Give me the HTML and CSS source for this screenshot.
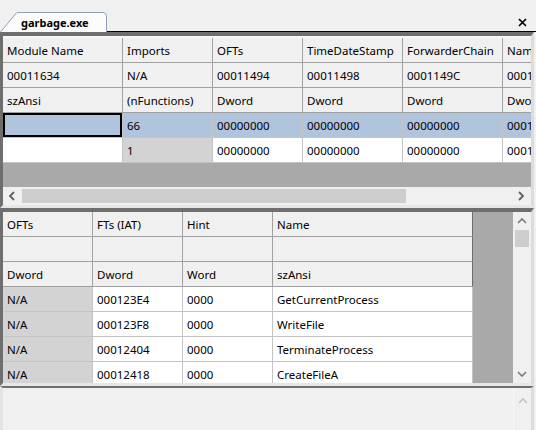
FILE: index.html
```html
<!DOCTYPE html>
<html lang="en">
<head>
  <meta charset="UTF-8">
  <title>garbage.exe - Imports</title>
  <link rel="stylesheet" href="styles.css">
</head>
<body>
  <div class="tabs">
    <div class="tab">
      <svg class="tab-shape" width="108" height="20" viewBox="0 0 108 20">
        <path d="M0.5 20 L16 1.5 Q16.5 0.5 18 0.5 H103 Q106.5 0.5 106.5 4 V20" fill="#fcfcfc" stroke="#8fa0b6" stroke-width="1"/>
      </svg>
      <span class="tab-label">garbage.exe</span>
    </div>
    <div class="tab-rest">
      <svg class="close" width="9" height="9" viewBox="0 0 9 9">
        <path d="M1 1 L8 8 M8 1 L1 8" stroke="#000" stroke-width="1.7"/>
      </svg>
    </div>
  </div>

  <div class="panel upper">
    <div class="grid-view">
      <div class="grid cols-up">
        <div class="c hd">Module Name</div>
        <div class="c hd">Imports</div>
        <div class="c hd">OFTs</div>
        <div class="c hd">TimeDateStamp</div>
        <div class="c hd">ForwarderChain</div>
        <div class="c hd">Name</div>

        <div class="c hd">00011634</div>
        <div class="c hd">N/A</div>
        <div class="c hd">00011494</div>
        <div class="c hd">00011498</div>
        <div class="c hd">0001149C</div>
        <div class="c hd">000117A0</div>

        <div class="c hd">szAnsi</div>
        <div class="c hd">(nFunctions)</div>
        <div class="c hd">Dword</div>
        <div class="c hd">Dword</div>
        <div class="c hd">Dword</div>
        <div class="c hd">Dword</div>

        <div class="c sel focus"></div>
        <div class="c sel">66</div>
        <div class="c sel">00000000</div>
        <div class="c sel">00000000</div>
        <div class="c sel">00000000</div>
        <div class="c sel">00012000</div>

        <div class="c wh"></div>
        <div class="c dim">1</div>
        <div class="c wh">00000000</div>
        <div class="c wh">00000000</div>
        <div class="c wh">00000000</div>
        <div class="c wh">00012100</div>
      </div>
    </div>
    <div class="hscroll">
      <svg class="arrow" width="8" height="10" viewBox="0 0 8 10">
        <path d="M6 1 L2 5 L6 9" fill="none" stroke="#606060" stroke-width="1.8"/>
      </svg>
      <div class="h-track"><div class="h-thumb"></div></div>
      <svg class="arrow" width="8" height="10" viewBox="0 0 8 10">
        <path d="M2 1 L6 5 L2 9" fill="none" stroke="#606060" stroke-width="1.8"/>
      </svg>
    </div>
  </div>

  <div class="panel lower">
    <div class="lower-body">
      <div class="grid-view">
        <div class="grid cols-low">
          <div class="c hd">OFTs</div>
          <div class="c hd">FTs (IAT)</div>
          <div class="c hd">Hint</div>
          <div class="c hd last">Name</div>

          <div class="c hd"></div>
          <div class="c hd"></div>
          <div class="c hd"></div>
          <div class="c hd last"></div>

          <div class="c hd">Dword</div>
          <div class="c hd">Dword</div>
          <div class="c hd">Word</div>
          <div class="c hd last">szAnsi</div>

          <div class="c dim">N/A</div>
          <div class="c wh">000123E4</div>
          <div class="c wh">0000</div>
          <div class="c wh">GetCurrentProcess</div>

          <div class="c dim">N/A</div>
          <div class="c wh">000123F8</div>
          <div class="c wh">0000</div>
          <div class="c wh">WriteFile</div>

          <div class="c dim">N/A</div>
          <div class="c wh">00012404</div>
          <div class="c wh">0000</div>
          <div class="c wh">TerminateProcess</div>

          <div class="c dim">N/A</div>
          <div class="c wh">00012418</div>
          <div class="c wh">0000</div>
          <div class="c wh">CreateFileA</div>
        </div>
      </div>
      <div class="vscroll">
        <svg class="arrow" width="10" height="8" viewBox="0 0 10 8">
          <path d="M1 6 L5 2 L9 6" fill="none" stroke="#7a7a7a" stroke-width="1.6"/>
        </svg>
        <div class="v-track"><div class="v-thumb"></div></div>
        <svg class="arrow" width="10" height="8" viewBox="0 0 10 8">
          <path d="M1 2 L5 6 L9 2" fill="none" stroke="#7a7a7a" stroke-width="1.6"/>
        </svg>
      </div>
    </div>
  </div>

  <div class="panel bottom">
    <div class="bottom-fill"></div>
    <div class="vscroll off">
      <svg class="arrow" width="10" height="8" viewBox="0 0 10 8">
        <path d="M1 6 L5 2 L9 6" fill="none" stroke="#c4c4c4" stroke-width="1.6"/>
      </svg>
    </div>
  </div>
</body>
</html>
```

FILE: styles.css
```css
* {
  margin: 0;
  padding: 0;
  box-sizing: border-box;
}

body {
  background: #f0f0f0;
  font-family: "Noto Sans", "Open Sans", sans-serif;
  font-size: 11.5px;
  color: #000;
  width: 536px;
  height: 430px;
  overflow: hidden;
}

/* tab strip */
.tabs {
  display: flex;
  align-items: flex-end;
  height: 32px;
}

.tab {
  position: relative;
  width: 107px;
  height: 20px;
  flex: none;
}

.tab-shape {
  position: absolute;
  left: 0;
  top: 0;
}

.tab-label {
  position: relative;
  display: block;
  padding-left: 21px;
  line-height: 21px;
  font-weight: 700;
  font-size: 11px;
}

.tab-rest {
  flex: 1;
  height: 32px;
  border-bottom: 1px solid #000;
  display: flex;
  justify-content: flex-end;
  align-items: flex-start;
  padding: 18px 9px 0 0;
}

/* panels */
.panel {
  width: 534px;
  border-left: 3px solid #6e6e6e;
  border-right: 3px solid #dcdcdc;
}

.upper {
  border-top: 4px solid #6e6e6e;
  border-bottom: 3px solid #e6e6e6;
}

.lower {
  border-top: 4px solid #6e6e6e;
  border-bottom: 3px solid #e6e6e6;
}

.bottom {
  border-top: 2px solid #6e6e6e;
  border-left: 3px solid #e4e4e4;
  height: 44px;
  display: flex;
}

.grid-view {
  background: #a9a9a9;
  overflow: hidden;
}

.upper .grid-view {
  height: 151px;
}

.grid {
  display: grid;
  grid-auto-rows: 25px;
}

.cols-up {
  grid-template-columns: 120px 90px 90px 100px 100px 100px;
  border-top: 2px solid #f7f7f7;
}

.cols-low {
  grid-template-columns: 90px 90px 90px 200px;
}

.c {
  border-right: 1px solid #c4c4c4;
  border-bottom: 1px solid #c4c4c4;
  padding: 2px 0 0 4px;
  line-height: 22px;
  white-space: nowrap;
  overflow: hidden;
}

.hd {
  background: #f0f0f0;
  border-color: #a0a0a0;
}

.hd.last {
  border-right-color: #6e6e6e;
}

.wh {
  background: #fff;
}

.dim {
  background: #d3d3d3;
}

.sel {
  background: #b0c4de;
}

.focus {
  box-shadow: inset 0 0 0 2px #000;
}

/* scrollbars */
.hscroll {
  height: 18px;
  display: flex;
  align-items: center;
  padding: 0 6px 0 5px;
  background: #f0f0f0;
}

.h-track {
  flex: 1;
  height: 14px;
  margin: 0 8px 0 6px;
}

.h-thumb {
  width: 384px;
  height: 14px;
  background: #cdcdcd;
}

.lower-body {
  display: flex;
  height: 171px;
}

.lower-body .grid-view {
  flex: 1;
}

.vscroll {
  width: 18px;
  flex: none;
  display: flex;
  flex-direction: column;
  align-items: center;
  padding: 5px 0;
  background: #f0f0f0;
}

.v-track {
  flex: 1;
  width: 14px;
  margin: 5px 0;
}

.v-thumb {
  width: 14px;
  height: 17px;
  background: #cdcdcd;
}

.bottom-fill {
  flex: 1;
}

.vscroll.off {
  padding-top: 9px;
  border-left: 1px solid #f8f8f8;
}

.arrow {
  flex: none;
}
```
